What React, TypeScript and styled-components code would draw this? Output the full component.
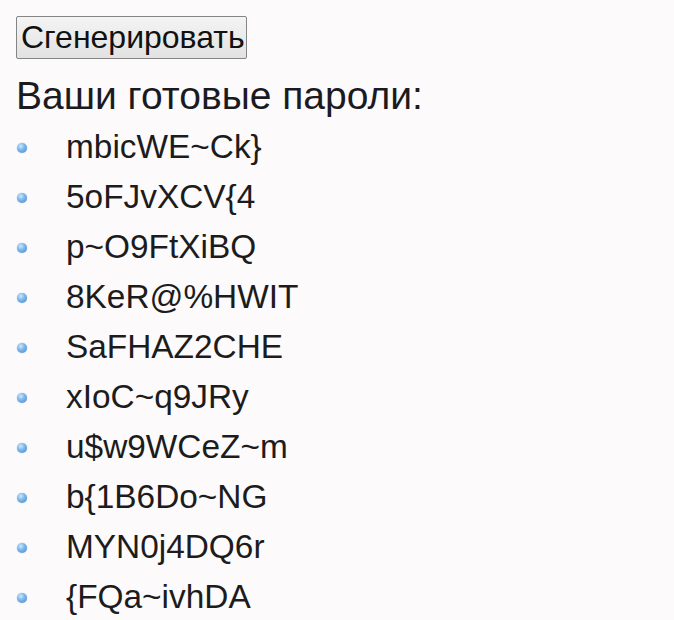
import React from "react";
import styled, { createGlobalStyle } from "styled-components";

const Global = createGlobalStyle`
  html, body { margin: 0; padding: 0; background: #fcfafb; }
  body { font-family: "Liberation Sans", Arial, sans-serif; color: #1a1a1a; }
`;

const Page = styled.div`
  padding: 16px 16px 0 16px;
  display: flex;
  flex-direction: column;
  align-items: flex-start;
  height: 620px;
  box-sizing: border-box;
  overflow: hidden;
`;

const GenButton = styled.button`
  font-family: "Liberation Sans", Arial, sans-serif;
  font-size: 32px;
  line-height: 37px;
  color: #111;
  padding: 2px 1px 2px 4px;
  border: 1px solid #858585;
  border-radius: 2px;
  background: linear-gradient(#f4f4f4, #e2e2e2);
  cursor: pointer;
`;

const Heading = styled.h2`
  margin: 15px 0 0 0;
  font-size: 39px;
  font-weight: normal;
  line-height: 44px;
  color: #1b1b1f;
`;

const List = styled.ul`
  list-style: none;
  margin: 4px 0 0 0;
  padding: 0;
`;

const Item = styled.li`
  display: flex;
  align-items: center;
  height: 50px;
  font-size: 33.4px;
  color: #1c1c1c;
`;

const Bullet = styled.span`
  flex: none;
  width: 10px;
  height: 10px;
  border-radius: 50%;
  margin: 2px 39px 0 1px;
  background: radial-gradient(circle at 38% 32%, #cfe8fb 0%, #7db8ea 40%, #3f88d0 100%);
  box-shadow: 0 0 1px rgba(40, 90, 160, 0.6);
`;

const passwords = [
  "mbicWE~Ck}",
  "5oFJvXCV{4",
  "p~O9FtXiBQ",
  "8KeR@%HWIT",
  "SaFHAZ2CHE",
  "xIoC~q9JRy",
  "u$w9WCeZ~m",
  "b{1B6Do~NG",
  "MYN0j4DQ6r",
  "{FQa~ivhDA",
];

export default function App() {
  return (
    <>
      <Global />
      <Page>
        <GenButton>Сгенерировать</GenButton>
        <Heading>Ваши готовые пароли:</Heading>
        <List>
          {passwords.map((p) => (
            <Item key={p}>
              <Bullet />
              {p}
            </Item>
          ))}
        </List>
      </Page>
    </>
  );
}
